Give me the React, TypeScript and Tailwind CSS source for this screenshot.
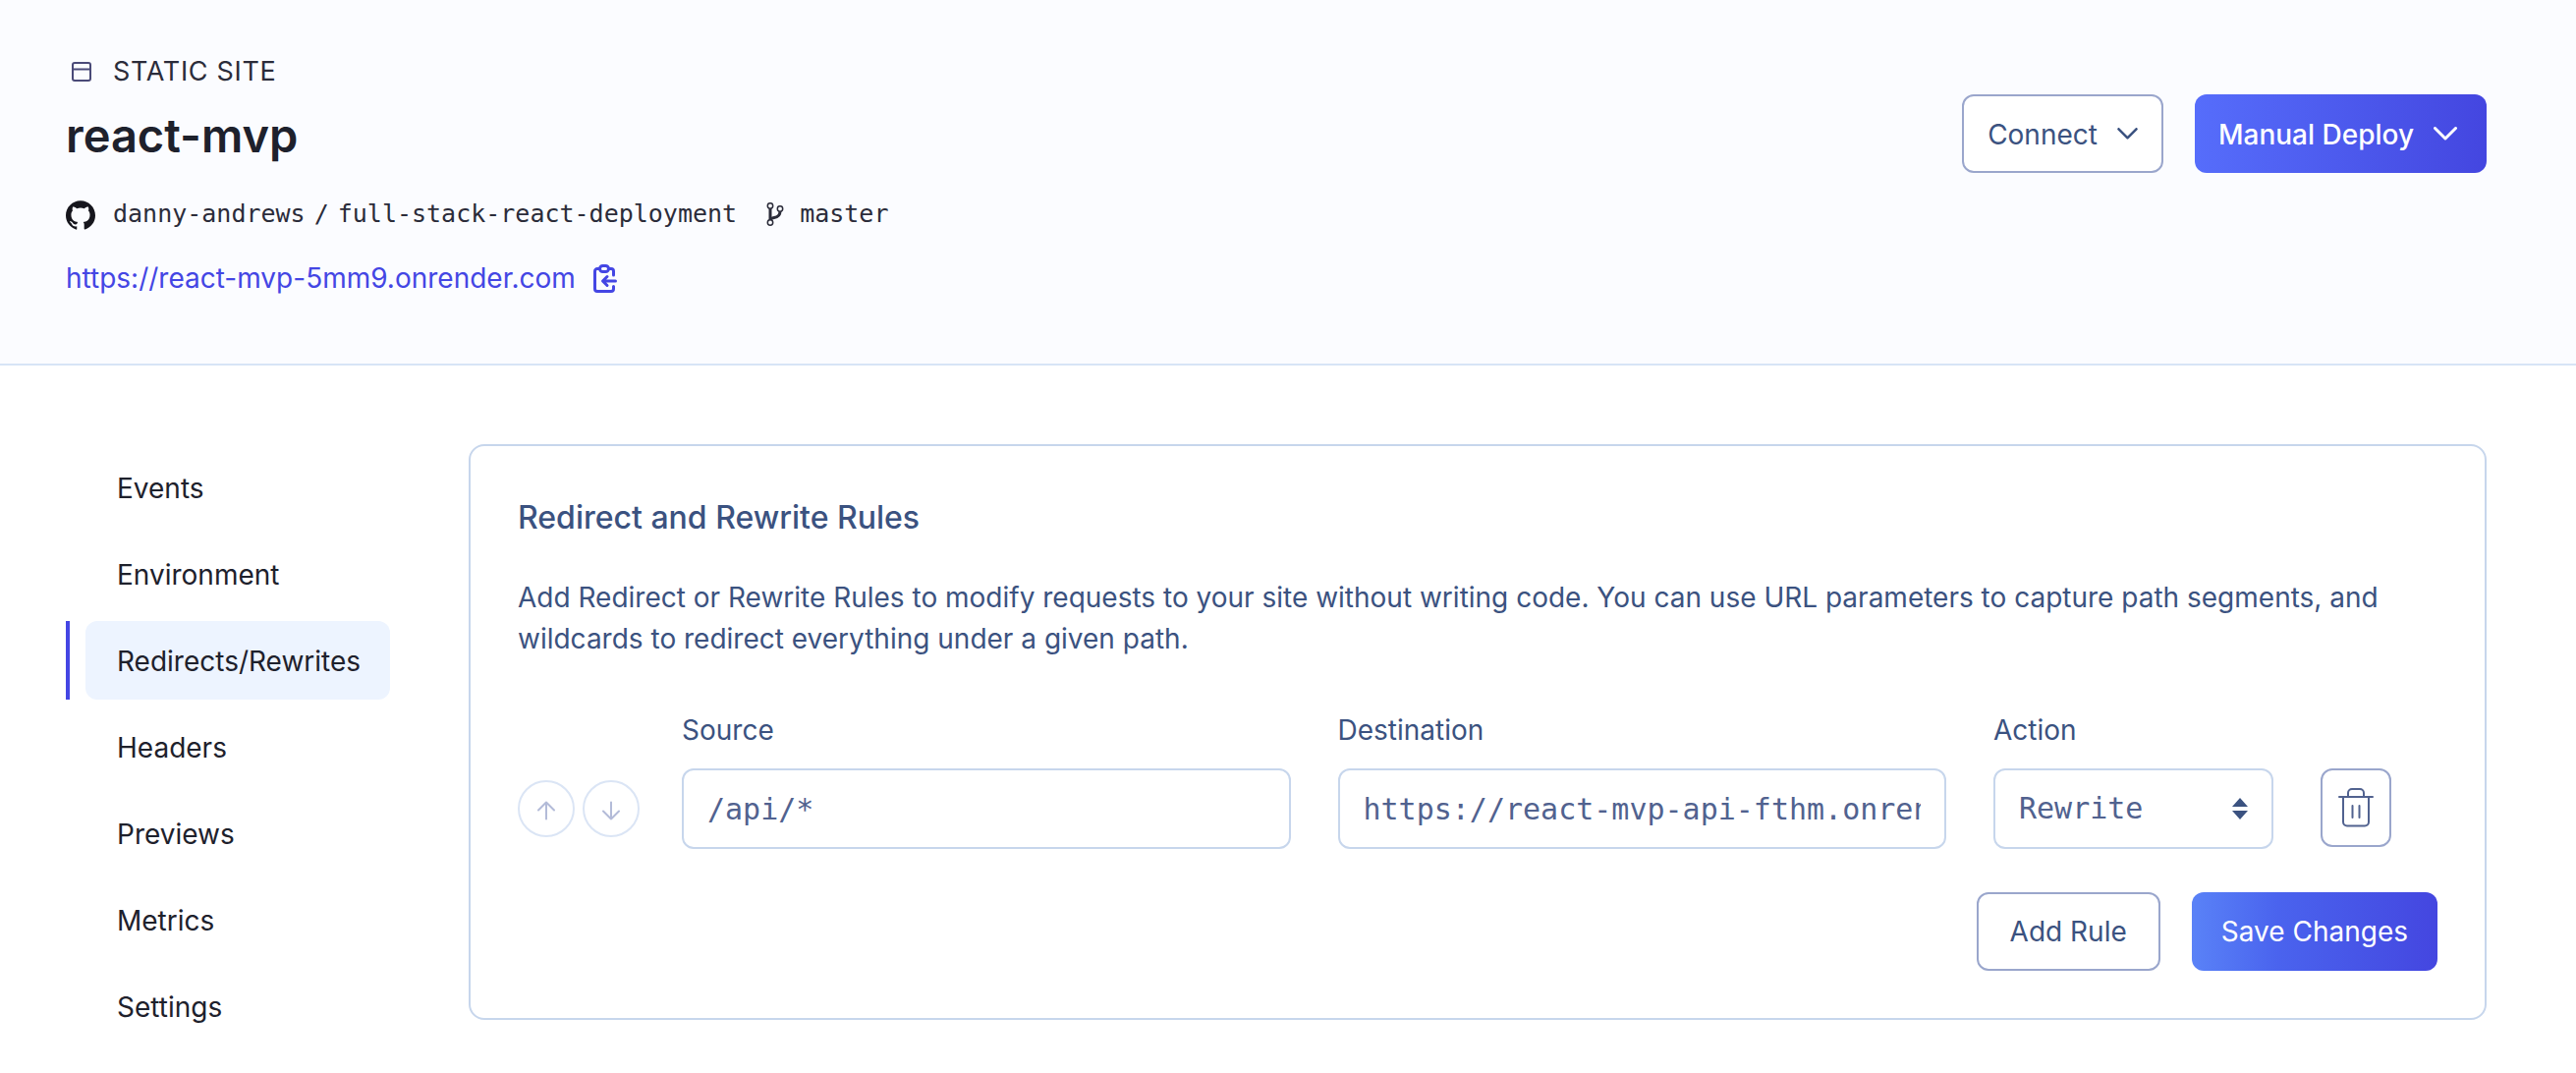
import React from "react";
import { SiGithub } from "react-icons/si";

const sans = "font-['Inter',sans-serif]";
const mono = "font-['DejaVu_Sans_Mono',monospace]";

const navItems = ["Events", "Environment", "Redirects/Rewrites", "Headers", "Previews", "Metrics", "Settings"];
const activeItem = "Redirects/Rewrites";

const outlineButton =
  "flex h-20 items-center rounded-xl border-2 border-[#9aa6cc] bg-white text-[#3b5280]";
const field =
  "h-[82px] w-full rounded-xl border-2 border-[#c7d6ec] bg-white px-6 text-[30px] text-[#51628f] outline-none focus:border-[#4446e4]";

function SiteIcon() {
  return (
    <svg className="size-5" viewBox="0 0 20 20" fill="none" stroke="#4a4a78" strokeWidth="2" aria-hidden="true">
      <rect x="1" y="1" width="18" height="18" rx="2" />
      <path d="M1 7.500h18" />
    </svg>
  );
}

function BranchIcon() {
  return (
    <svg className="h-6 w-[18px]" viewBox="0 0 18 24" fill="none" stroke="#2b2c3a" strokeWidth="1.5" aria-hidden="true">
      <path d="M4 6v12" strokeWidth="3" />
      <path d="M14 9c0 4.500-2.500 6-6 6.500-2.500.4-3.500 1-4 2.500" strokeWidth="3" />
      <circle cx="4" cy="3.500" r="2.700" fill="#fbfcff" />
      <circle cx="14" cy="6.500" r="2.700" fill="#fbfcff" />
      <circle cx="4" cy="20.500" r="2.700" fill="#fbfcff" />
    </svg>
  );
}

function CopyIcon() {
  return (
    <svg className="h-[29px] w-6" viewBox="0 0 24 29" fill="none" stroke="currentColor" strokeWidth="3" strokeLinecap="round" strokeLinejoin="round" aria-hidden="true">
      <path d="M6 4.500H4A2.500 2.500 0 0 0 1.500 7v18A2.500 2.500 0 0 0 4 27.500h14a2.500 2.500 0 0 0 2.500-2.500v-2.500M15.500 4.500H18A2.500 2.500 0 0 1 20.500 7v4" />
      <rect x="6.500" y="1.500" width="9" height="6" rx="3" />
      <path d="M22.500 17H10M14 12.500 9.500 17l4.500 4.500" />
    </svg>
  );
}

function Chevron({ className }: { className: string }) {
  return (
    <svg className={className} viewBox="0 0 24 14" fill="none" stroke="currentColor" strokeWidth="3" strokeLinecap="round" strokeLinejoin="round" aria-hidden="true">
      <path d="M1.500 1.500 12 12 22.500 1.500" />
    </svg>
  );
}

function Arrow({ down = false }: { down?: boolean }) {
  return (
    <svg className="mt-1 size-5" viewBox="0 0 20 20" fill="none" stroke="#b3bbd8" strokeWidth="2" strokeLinecap="round" strokeLinejoin="round" aria-hidden="true">
      {down ? <path d="M10 1.500v17M2 10.500l8 8 8-8" /> : <path d="M10 18.500v-17M2 9.500l8-8 8 8" />}
    </svg>
  );
}

function TrashIcon() {
  return (
    <svg className="h-10 w-9" viewBox="0 0 36 40" fill="none" stroke="#51628f" strokeWidth="2" strokeLinecap="round" strokeLinejoin="round" aria-hidden="true">
      <path d="M1 9h34" />
      <path d="M10 9V5a4 4 0 0 1 4-4h8a4 4 0 0 1 4 4v4" />
      <path d="M5 9v25.500a4 4 0 0 0 4 4h18a4 4 0 0 0 4-4V9M14.500 18v12M21.500 18v12" />
    </svg>
  );
}

export default function App() {
  return (
    <div className={`min-h-screen bg-white text-[28px] leading-[42px] text-[#1e212c] ${sans}`}>
      <header className="flex items-start justify-between border-b-2 border-[#d7e4f6] bg-[#fbfcff] pt-[52px] pr-[91px] pb-[66px] pl-[67px]">
        <div>
          <div className="flex items-center text-[27px] text-[#2b2c3a]">
            <span className="mr-[22px] ml-[6px]">
              <SiteIcon />
            </span>
            <span className="tracking-wide">STATIC SITE</span>
          </div>
          <h1 className="mt-[14px] text-[47px] leading-[60px] font-semibold">react-mvp</h1>
          <div className={`mt-[29px] flex items-center text-[25px] text-[#2b2c3a] ${mono}`}>
            <SiGithub className="mt-[2px] mr-[18px] size-[30px] text-[#16161d]" />
            <a href="#owner">danny-andrews</a>
            <span className="mx-[9px]">/</span>
            <a href="#repo">full-stack-react-deployment</a>
            <span className="mr-4 ml-[30px]">
              <BranchIcon />
            </span>
            <a href="#branch">master</a>
          </div>
          <div className="mt-[23px] flex items-center gap-[18px] text-[#4446e4]">
            <a href="https://react-mvp-5mm9.onrender.com">https://react-mvp-5mm9.onrender.com</a>
            <button type="button" aria-label="Copy URL">
              <CopyIcon />
            </button>
          </div>
        </div>
        <div className="mt-11 flex gap-8">
          <button type="button" className={`${outlineButton} gap-5 px-6`}>
            <span className="pt-[2px]">Connect</span>
            <Chevron className="h-3 w-[21px]" />
          </button>
          <button
            type="button"
            className="flex h-20 items-center gap-5 rounded-xl bg-linear-to-r from-[#566dfb] to-[#4446e0] pr-[30px] pl-6 font-medium text-white"
          >
            <span className="pt-[2px]">Manual Deploy</span>
            <Chevron className="h-[14px] w-6" />
          </button>
        </div>
      </header>

      <div className="flex items-start gap-20 pt-20 pr-[91px] pb-[55px] pl-[67px]">
        <nav className="mt-1 flex w-[330px] shrink-0 flex-col gap-2">
          {navItems.map((item) => {
            const active = item === activeItem;
            return (
              <a
                key={item}
                href={`#${item}`}
                aria-current={active ? "page" : undefined}
                className={`border-l-4 pl-4 ${active ? "border-[#4446e4]" : "border-transparent"}`}
              >
                <span className={`flex h-20 items-center rounded-xl px-8 pt-[2px] ${active ? "bg-[#edf4ff]" : ""}`}>
                  {item}
                </span>
              </a>
            );
          })}
        </nav>

        <main className="min-w-0 flex-1 rounded-2xl border-2 border-[#c7d6ec] p-12 text-[#3b5280]">
          <h2 className="text-[32px] leading-[50px] font-medium">Redirect and Rewrite Rules</h2>
          <p className="mt-[35px]">
            Add Redirect or Rewrite Rules to modify requests to your site without writing code. You can use URL
            parameters to capture path segments, and wildcards to redirect everything under a given path.
          </p>
          <form className="mt-[51px]" onSubmit={(e) => e.preventDefault()}>
            <div className="flex items-end gap-12 pr-[47px]">
              <div className="-mr-[5px] mb-3 flex gap-2">
                <button type="button" aria-label="Move up" className="flex size-[58px] items-center justify-center rounded-full border-2 border-[#dbe5f5]">
                  <Arrow />
                </button>
                <button type="button" aria-label="Move down" className="flex size-[58px] items-center justify-center rounded-full border-2 border-[#dbe5f5]">
                  <Arrow down />
                </button>
              </div>
              <div className="min-w-0 flex-1">
                <label htmlFor="source" className="mb-[18px] block">Source</label>
                <input id="source" type="text" defaultValue="/api/*" className={`${field} ${mono}`} />
              </div>
              <div className="min-w-0 flex-1">
                <label htmlFor="destination" className="mb-[18px] block">Destination</label>
                <input
                  id="destination"
                  type="text"
                  defaultValue="https://react-mvp-api-fthm.onrender.com/api/*"
                  className={`${field} ${mono}`}
                />
              </div>
              <div className="w-[285px]">
                <label htmlFor="action" className="mb-[18px] block">Action</label>
                <div className="relative">
                  <select id="action" defaultValue="Rewrite" className={`${field} ${mono} appearance-none`}>
                    <option>Rewrite</option>
                    <option>Redirect</option>
                  </select>
                  <svg className="pointer-events-none absolute inset-y-0 right-[26px] my-auto h-[22px] w-4" viewBox="0 0 16 22" fill="#3b5280" aria-hidden="true">
                    <path d="M8 0l8 9H0zM8 22l8-9H0z" />
                  </svg>
                </div>
              </div>
              <button type="button" aria-label="Delete rule" className={`${outlineButton} mb-[2px] w-[72px] justify-center`}>
                <TrashIcon />
              </button>
            </div>
            <div className="mt-11 flex justify-end gap-8">
              <button type="button" className={`${outlineButton} px-8`}>Add Rule</button>
              <button
                type="submit"
                className="h-20 rounded-xl bg-linear-to-r from-[#5a82f7] via-[#4a63ee] via-35% to-[#4446e0] px-[30px] text-white"
              >
                Save Changes
              </button>
            </div>
          </form>
        </main>
      </div>
    </div>
  );
}
